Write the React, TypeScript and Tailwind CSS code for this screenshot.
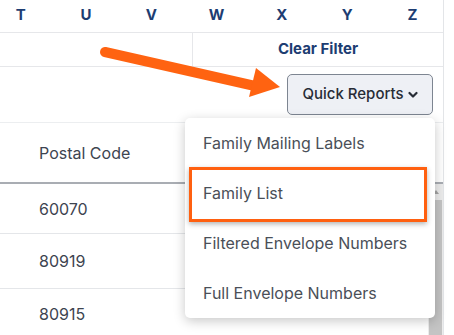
import React from "react";

const letters = ["T", "U", "V", "W", "X", "Y", "Z"];
const items = ["Family Mailing Labels", "Family List", "Filtered Envelope Numbers", "Full Envelope Numbers"];

export default function App() {
  return (
    <div className="relative w-[454px] h-[335px] overflow-hidden bg-white" style={{ fontFamily: "Inter, 'Liberation Sans', sans-serif" }}>
      <div className="w-[444px] h-[335px] border-r border-[#e3e5e8] flex flex-col overflow-hidden">
        {/* Letters row */}
        <div className="h-[33px] shrink-0 flex items-center border-b border-[#e6e7ea] overflow-hidden">
          <div className="flex ml-[-12px] mt-[-1px]">
            {letters.map((l) => (
              <div key={l} className="w-[65.3px] shrink-0 text-center text-[15px] font-bold text-[#1d3d72]">{l}</div>
            ))}
          </div>
        </div>
        {/* Clear filter row */}
        <div className="h-[34px] shrink-0 flex border-b border-[#e6e7ea]">
          <div className="w-[193px] border-r border-[#e6e7ea]" />
          <div className="flex-1 flex items-center justify-center text-[15px] font-bold text-[#1d3d72]">Clear Filter</div>
        </div>
        {/* Button row */}
        <div className="h-[56px] shrink-0 flex items-center justify-end pr-[10px] border-b border-[#eceef0]">
          <button className="h-[41px] w-[146px] rounded-[5px] border border-[#7d8591] bg-[#eef0f5] flex items-center justify-center gap-[4px] text-[15px] font-medium text-[#272c36]">
            <span>Quick Reports</span>
            <svg width="10" height="8" viewBox="0 0 10 8" className="mt-[1px]">
              <path d="M1.5 2 L5 5.5 L8.5 2" fill="none" stroke="#272c36" strokeWidth="2.2" strokeLinecap="round" strokeLinejoin="round" />
            </svg>
          </button>
        </div>
        {/* Table header */}
        <div className="h-[61px] shrink-0 flex items-center pl-[39px] text-[16px] text-[#3d4450] border-b-2 border-[#a9adb3]">Postal Code</div>
        {/* Table body */}
        <div className="flex-1 flex min-h-0">
          <div className="flex-1 flex flex-col">
            <div className="h-[50px] shrink-0 flex items-center pl-[39px] text-[16px] text-[#3d4450] border-b border-[#e4e6e9]">60070</div>
            <div className="h-[55px] shrink-0 flex items-center pl-[39px] text-[16px] text-[#3d4450] border-b border-[#e4e6e9]">80919</div>
            <div className="h-[50px] shrink-0 flex items-center pl-[39px] text-[16px] text-[#3d4450]">80915</div>
          </div>
          {/* Scrollbar */}
          <div className="w-[15px] flex flex-col bg-[#ececec]">
            <div className="h-[16px] flex items-center justify-center">
              <div className="w-0 h-0 border-l-[3px] border-r-[3px] border-b-[4px] border-l-transparent border-r-transparent border-b-[#a3a3a3]" />
            </div>
            <div className="flex-1 mx-[1px] bg-[#c4c4c4]" />
          </div>
        </div>
      </div>

      {/* Dropdown menu */}
      <div className="absolute left-[185px] top-[118px] w-[250px] h-[200px] bg-white rounded-[5px] shadow-[0_3px_12px_rgba(0,0,0,0.22)] flex flex-col">
        {items.map((t) => (
          <div key={t} className="h-[50px] flex items-center pl-[18px] text-[16px] text-[#4a4f58]">{t}</div>
        ))}
      </div>

      {/* Highlight box */}
      <div className="absolute left-[189px] top-[167px] w-[238px] h-[55px] border-[3px] border-[#ff6010] shadow-[0_2px_5px_rgba(0,0,0,0.3)]" />

      {/* Arrow */}
      <svg className="absolute left-0 top-0 pointer-events-none" width="454" height="335" viewBox="0 0 454 335">
        <line x1="105" y1="52" x2="255" y2="86" stroke="#ff6311" strokeWidth="10" strokeLinecap="round" />
        <polygon points="256,68 280,87 249,97" fill="#ff6311" />
      </svg>
    </div>
  );
}
